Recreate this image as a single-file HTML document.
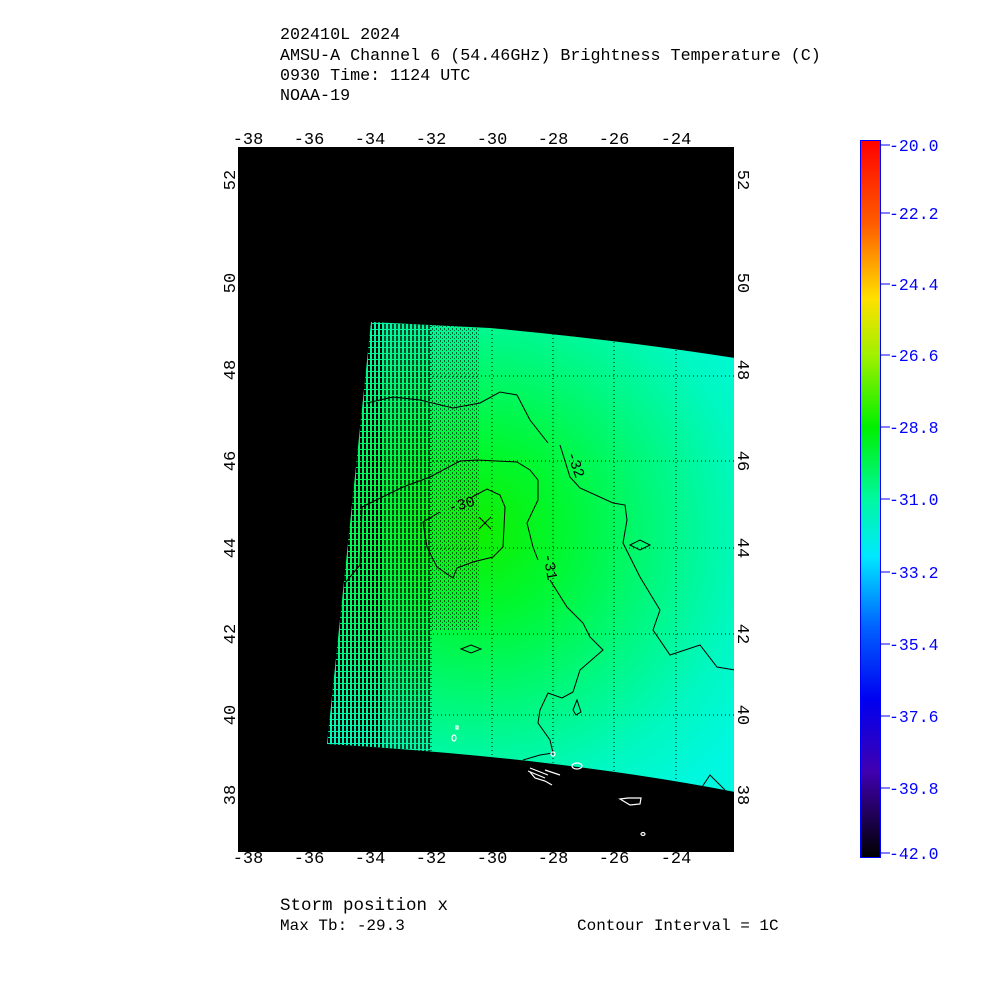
<!DOCTYPE html>
<html><head><style>
html,body{margin:0;padding:0;background:#fff;}
svg{display:block}
text{font-family:"Liberation Mono","DejaVu Sans Mono",monospace;}
</style></head><body>
<svg width="1000" height="1000" viewBox="0 0 1000 1000" xmlns="http://www.w3.org/2000/svg">
<defs>
<radialGradient id="bt" gradientUnits="userSpaceOnUse" cx="480" cy="530" r="330" fx="480" fy="530">
<stop offset="0" stop-color="#10f000"/>
<stop offset="0.25" stop-color="#00f830"/>
<stop offset="0.55" stop-color="#00f880"/>
<stop offset="0.8" stop-color="#00f8c0"/>
<stop offset="1" stop-color="#00f8e0"/>
</radialGradient>
<linearGradient id="cb" x1="0" y1="0" x2="0" y2="1">
<stop offset="0" stop-color="#ff0000"/>
<stop offset="0.12" stop-color="#ff6000"/>
<stop offset="0.22" stop-color="#ffe000"/>
<stop offset="0.3" stop-color="#a0f000"/>
<stop offset="0.4" stop-color="#00f000"/>
<stop offset="0.5" stop-color="#00f8a0"/>
<stop offset="0.58" stop-color="#00e8ff"/>
<stop offset="0.68" stop-color="#0060ff"/>
<stop offset="0.78" stop-color="#0000f0"/>
<stop offset="0.88" stop-color="#4000b0"/>
<stop offset="1" stop-color="#000000"/>
</linearGradient>
<pattern id="vs" width="4" height="6" patternUnits="userSpaceOnUse">
<rect x="0" y="0" width="2" height="5" fill="#000"/>
</pattern>
<pattern id="ds" width="4" height="4" patternUnits="userSpaceOnUse">
<rect x="0" y="0" width="1" height="2" fill="#000"/>
<rect x="2" y="2" width="1" height="1" fill="#000"/>
</pattern>
<clipPath id="sw"><path d="M371,322 L490,328 Q620,340 735,358 L735,792 Q560,758 327,744 Z"/></clipPath>
</defs>

<g font-size="16.7" fill="#000">
<text x="280" y="39">202410L 2024</text>
<text x="280" y="60">AMSU-A Channel 6 (54.46GHz) Brightness Temperature (C)</text>
<text x="280" y="80">0930 Time: 1124 UTC</text>
<text x="280" y="100">NOAA-19</text>
</g>

<rect x="237" y="146" width="498" height="707" fill="#000"/>
<g clip-path="url(#sw)">
<rect x="237" y="146" width="498" height="707" fill="url(#bt)"/>
<rect x="320" y="300" width="62" height="460" fill="url(#vs)"/>
<rect x="382" y="300" width="50" height="460" fill="url(#vs)" opacity="0.7"/>
<rect x="430" y="300" width="50" height="330" fill="url(#ds)" opacity="0.6"/>
<g stroke="#000" stroke-width="1" stroke-dasharray="1,3">
<line x1="431" y1="146" x2="431" y2="853"/><line x1="492" y1="146" x2="492" y2="853"/>
<line x1="553" y1="146" x2="553" y2="853"/><line x1="614" y1="146" x2="614" y2="853"/>
<line x1="676" y1="146" x2="676" y2="853"/>
<line x1="237" y1="376" x2="735" y2="376"/><line x1="237" y1="461" x2="735" y2="461"/>
<line x1="237" y1="548" x2="735" y2="548"/><line x1="237" y1="634" x2="735" y2="634"/>
<line x1="237" y1="715" x2="735" y2="715"/>
</g>
<g fill="none" stroke="#000" stroke-width="1">
<polyline points="367,403 393,397 420,400 453,408 480,403 500,392 517,395 530,420 548,443"/>
<polyline points="560,445 570,477 580,488 613,503 625,505 627,520 623,543 640,577 660,610 653,630 670,655 700,645 717,667 735,670"/>
<polyline points="345,583 360,565 362,507 403,487 430,477 460,461 477,460 517,462 530,470 538,480 538,500 527,523 533,547 538,560"/>
<polyline points="550,580 567,607 583,623 590,637 603,650 580,670 573,692 562,698 548,693 540,710 538,723 550,740 553,753 540,755 523,760"/>
<polyline points="440,512 423,522 427,547 437,567 453,578 457,568 473,562 493,557 503,547 505,507 500,495 487,489 472,497"/>
<polygon points="630,545 640,540 650,545 640,550"/>
<polygon points="461,649 471,645 481,649 471,653"/>
<polygon points="577,700 581,712 576,715 573,710"/>
<polyline points="700,790 710,775 725,790"/>
</g>
</g>
<g font-size="15" fill="#000">
<text x="448" y="510" transform="rotate(-15 458 505)">-30</text>
<text x="558" y="460" transform="rotate(70 567 463)">-32</text>
<text x="530" y="560" transform="rotate(80 540 565)">-31</text>
</g>
<g stroke="#000" stroke-width="1"><line x1="479" y1="517" x2="491" y2="529"/><line x1="491" y1="517" x2="479" y2="529"/></g>
<g fill="none" stroke="#fff" stroke-width="1.2">
<ellipse cx="454" cy="738" rx="2" ry="3"/><rect x="456" y="726" width="2" height="3"/>
<ellipse cx="553" cy="754" rx="2" ry="2"/>
<ellipse cx="577" cy="766" rx="5" ry="3"/>
<path d="M528,771 L545,778 M530,768 L548,775 M545,770 L560,775"/>
<path d="M530,772 L535,778 L545,781 L552,785"/>
<path d="M620,799 L630,805 L640,804 L641,798 L628,798 Z"/>
<ellipse cx="643" cy="834" rx="2" ry="1.5"/>
</g>
<rect x="237.5" y="146.5" width="497" height="706" fill="none" stroke="#fff" stroke-width="1"/>

<g font-size="17" fill="#000" text-anchor="middle">
<text x="248" y="144">-38</text><text x="309" y="144">-36</text><text x="370" y="144">-34</text>
<text x="431" y="144">-32</text><text x="492" y="144">-30</text><text x="553" y="144">-28</text>
<text x="614" y="144">-26</text><text x="676" y="144">-24</text>
<text x="248" y="863">-38</text><text x="309" y="863">-36</text><text x="370" y="863">-34</text>
<text x="431" y="863">-32</text><text x="492" y="863">-30</text><text x="553" y="863">-28</text>
<text x="614" y="863">-26</text><text x="676" y="863">-24</text>
</g>
<g font-size="17" fill="#000" text-anchor="middle">
<text transform="translate(235,180) rotate(-90)">52</text>
<text transform="translate(235,283) rotate(-90)">50</text>
<text transform="translate(235,370) rotate(-90)">48</text>
<text transform="translate(235,461) rotate(-90)">46</text>
<text transform="translate(235,548) rotate(-90)">44</text>
<text transform="translate(235,634) rotate(-90)">42</text>
<text transform="translate(235,715) rotate(-90)">40</text>
<text transform="translate(235,795) rotate(-90)">38</text>
<text transform="translate(738,180) rotate(90)">52</text>
<text transform="translate(738,283) rotate(90)">50</text>
<text transform="translate(738,370) rotate(90)">48</text>
<text transform="translate(738,461) rotate(90)">46</text>
<text transform="translate(738,548) rotate(90)">44</text>
<text transform="translate(738,634) rotate(90)">42</text>
<text transform="translate(738,715) rotate(90)">40</text>
<text transform="translate(738,795) rotate(90)">38</text>
</g>

<rect x="860.5" y="140.5" width="20" height="717" fill="url(#cb)" stroke="#0000ff" stroke-width="1"/>
<g stroke="#0000ff" stroke-width="1">
<line x1="881" y1="145" x2="890" y2="145"/><line x1="881" y1="213" x2="890" y2="213"/>
<line x1="881" y1="284" x2="890" y2="284"/><line x1="881" y1="355" x2="890" y2="355"/>
<line x1="881" y1="427" x2="890" y2="427"/><line x1="881" y1="499" x2="890" y2="499"/>
<line x1="881" y1="572" x2="890" y2="572"/><line x1="881" y1="644" x2="890" y2="644"/>
<line x1="881" y1="716" x2="890" y2="716"/><line x1="881" y1="788" x2="890" y2="788"/>
<line x1="881" y1="853" x2="890" y2="853"/>
</g>
<g font-size="16.5" fill="#0000ff">
<text x="889" y="151">-20.0</text><text x="889" y="219">-22.2</text>
<text x="889" y="290">-24.4</text><text x="889" y="361">-26.6</text>
<text x="889" y="433">-28.8</text><text x="889" y="505">-31.0</text>
<text x="889" y="578">-33.2</text><text x="889" y="650">-35.4</text>
<text x="889" y="722">-37.6</text><text x="889" y="794">-39.8</text>
<text x="889" y="859">-42.0</text>
</g>

<text x="280" y="910" font-size="17.5" fill="#000">Storm position x</text>
<text x="280" y="930" font-size="16" fill="#000">Max Tb: -29.3</text>
<text x="577" y="930" font-size="16" fill="#000">Contour Interval = 1C</text>
</svg>
</body></html>
